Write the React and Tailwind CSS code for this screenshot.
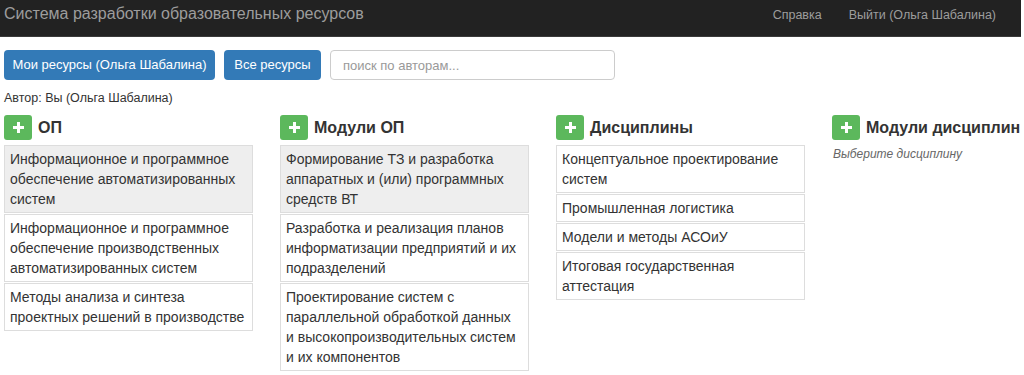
import React from 'react';

const columns = [
  {
    title: 'ОП',
    items: [
      { text: 'Информационное и программное обеспечение автоматизированных систем', active: true },
      { text: 'Информационное и программное обеспечение производственных автоматизированных систем' },
      { text: 'Методы анализа и синтеза проектных решений в производстве' },
    ],
  },
  {
    title: 'Модули ОП',
    items: [
      { text: 'Формирование ТЗ и разработка аппаратных и (или) программных средств ВТ', active: true },
      { text: 'Разработка и реализация планов информатизации предприятий и их подразделений' },
      { text: 'Проектирование систем с параллельной обработкой данных и\u00a0высокопроизводительных систем и\u00a0их компонентов' },
    ],
  },
  {
    title: 'Дисциплины',
    items: [
      { text: 'Концептуальное проектирование систем' },
      { text: 'Промышленная логистика' },
      { text: 'Модели и методы АСОиУ' },
      { text: 'Итоговая государственная аттестация' },
    ],
  },
  {
    title: 'Модули дисциплин',
    empty: 'Выберите дисциплину',
  },
];

const PlusButton = () => (
  <button className="flex h-[25px] w-[28px] shrink-0 items-center justify-center rounded-[3px] bg-[#5cb85c]">
    <svg width="11" height="11" viewBox="0 0 11 11">
      <rect x="4" y="0" width="3" height="11" fill="#fff" />
      <rect x="0" y="4" width="11" height="3" fill="#fff" />
    </svg>
  </button>
);

const App = () => {
  return (
    <div className="min-h-[375px] overflow-hidden bg-white font-['Liberation_Sans',Arial,sans-serif] text-[#333]">
      {/* Navbar */}
      <div className="flex h-[37px] w-[1021px] items-start justify-between border-b border-[#3a3a3a] bg-[#222]">
        <div className="pl-[4px] pt-[4px] text-[16px] leading-[20px] text-[#9d9d9d]">
          Система разработки образовательных ресурсов
        </div>
        <div className="flex gap-[27px] pr-[25px] pt-[7px] text-[12.5px] leading-[16px] text-[#9d9d9d]">
          <span>Справка</span>
          <span>Выйти (Ольга Шабалина)</span>
        </div>
      </div>

      {/* Toolbar */}
      <div className="mt-[13px] flex items-center gap-[9px] px-[4px]">
        <button className="h-[30px] w-[211px] rounded-[4px] bg-[#337ab7] text-[13px] leading-[20px] text-white">
          Мои ресурсы (Ольга Шабалина)
        </button>
        <button className="h-[30px] w-[97px] rounded-[4px] bg-[#337ab7] text-[13px] leading-[20px] text-white">
          Все ресурсы
        </button>
        <input
          type="text"
          placeholder="поиск по авторам..."
          className="h-[30px] w-[285px] rounded-[4px] border border-[#ccc] px-[12px] text-[13px] placeholder-[#999] focus:outline-none"
        />
      </div>

      <div className="mt-[10px] px-[4px] text-[12.5px] leading-[17px]">Автор: Вы (Ольга Шабалина)</div>

      {/* Columns */}
      <div className="mt-[8px] flex gap-[27px] px-[4px]">
        {columns.map(col => (
          <div key={col.title} className={col.items ? 'w-[249px] shrink-0' : 'min-w-0 flex-1'}>
            <div className="flex items-center gap-[6px]">
              <PlusButton />
              <h4 className="whitespace-nowrap text-[16px] font-bold leading-[20px] text-[#333]">{col.title}</h4>
            </div>
            {col.items ? (
              <div className="mt-[5px]">
                {col.items.map(item => (
                  <div
                    key={item.text}
                    className={`mb-[1px] border border-[#ddd] px-[5px] py-[3px] text-[14px] leading-[20px] ${
                      item.active ? 'bg-[#eee]' : 'bg-white'
                    }`}
                  >
                    {item.text}
                  </div>
                ))}
              </div>
            ) : (
              <div className="mt-[6px] pl-[1px] text-[12px] italic leading-[17px] text-[#666]">{col.empty}</div>
            )}
          </div>
        ))}
      </div>
    </div>
  );
};

export default App;
